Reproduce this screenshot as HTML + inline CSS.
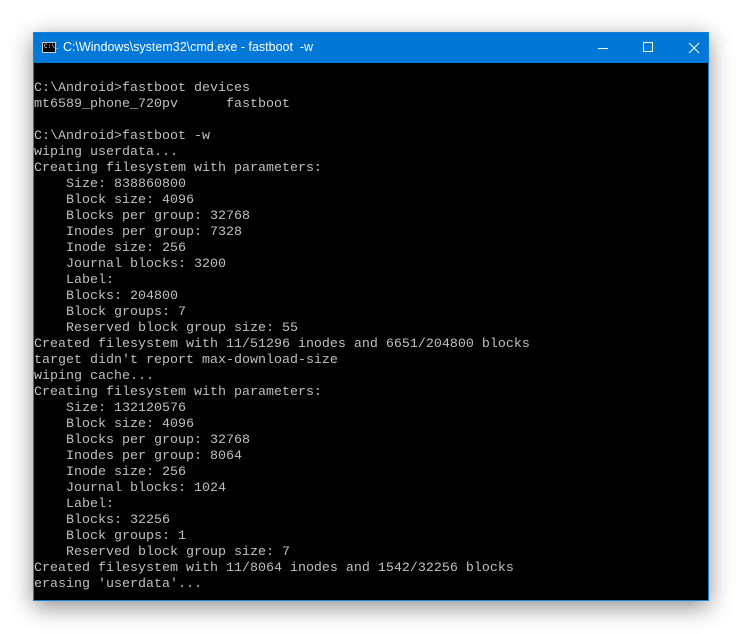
<!DOCTYPE html>
<html><head><style>
body{margin:0;width:742px;height:634px;background:#fff;position:relative;overflow:hidden}
.win{position:absolute;left:33px;top:32px;width:676px;height:569px;background:#000;border:1px solid #1a7fd4;box-sizing:border-box;box-shadow:0 6px 22px rgba(0,0,0,.45)}
.tb{position:absolute;left:0;top:0;right:0;height:30px;background:#0078d7;color:#fff;font:12.5px "Liberation Sans",sans-serif}
.tb .t{position:absolute;left:29px;top:7px;white-space:pre}
.ic{position:absolute;left:8px;top:9px;width:14px;height:11px;background:#000;border:1px solid #ccc;box-sizing:border-box}
.ic:after{content:"C:\\_";position:absolute;left:1px;top:0;font:6px "Liberation Mono",monospace;color:#fff}
pre{position:absolute;left:0;top:32px;margin:0;color:#c0c0c0;font:13.33px/16px "Liberation Mono",monospace}
</style></head><body>
<div class="win">
<div class="tb"><div class="ic"></div><span class="t">C:\Windows\system32\cmd.exe - fastboot  -w</span>
<svg style="position:absolute;right:0;top:0" width="140" height="30"><g stroke="#fff" fill="none" stroke-width="1"><line x1="30" y1="15.5" x2="40" y2="15.5"/><rect x="75.5" y="9.5" width="9" height="9"/><line x1="121" y1="10" x2="131" y2="20"/><line x1="131" y1="10" x2="121" y2="20"/></g></svg></div>
<pre>

C:\Android>fastboot devices
mt6589_phone_720pv      fastboot

C:\Android>fastboot -w
wiping userdata...
Creating filesystem with parameters:
    Size: 838860800
    Block size: 4096
    Blocks per group: 32768
    Inodes per group: 7328
    Inode size: 256
    Journal blocks: 3200
    Label:
    Blocks: 204800
    Block groups: 7
    Reserved block group size: 55
Created filesystem with 11/51296 inodes and 6651/204800 blocks
target didn't report max-download-size
wiping cache...
Creating filesystem with parameters:
    Size: 132120576
    Block size: 4096
    Blocks per group: 32768
    Inodes per group: 8064
    Inode size: 256
    Journal blocks: 1024
    Label:
    Blocks: 32256
    Block groups: 1
    Reserved block group size: 7
Created filesystem with 11/8064 inodes and 1542/32256 blocks
erasing 'userdata'...</pre>
</div>
</body></html>
